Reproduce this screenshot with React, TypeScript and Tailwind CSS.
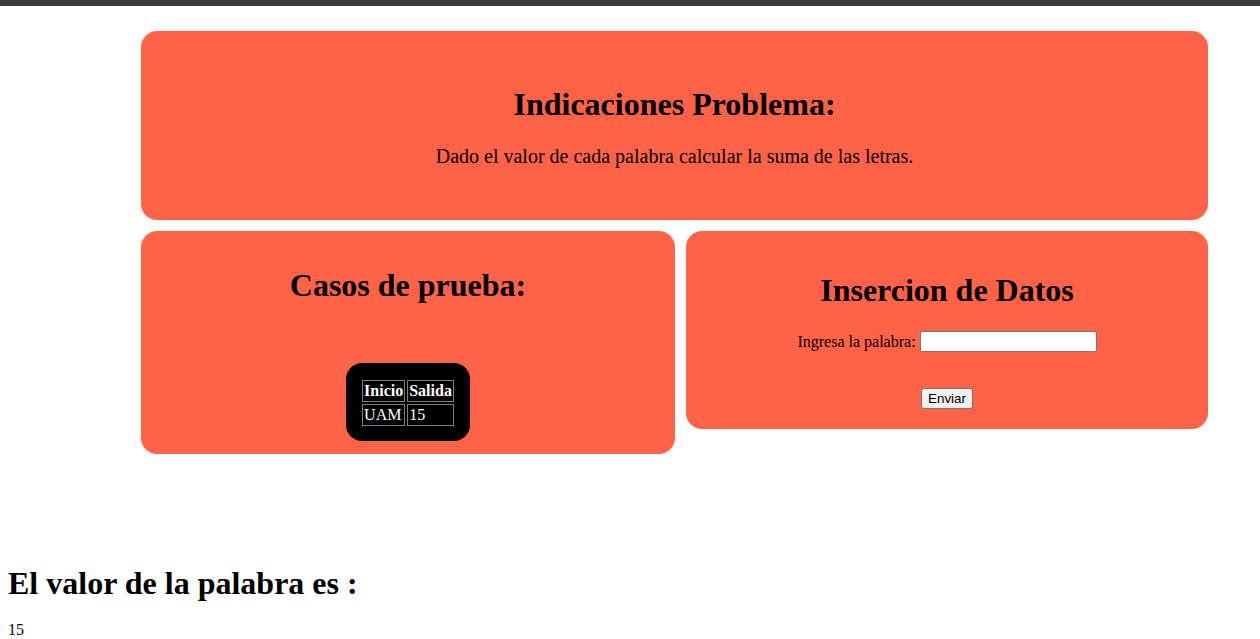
export default function App() {
  return (
    <div className="min-h-screen bg-white text-black font-['Liberation_Serif','Times_New_Roman',serif]">
      <div className="h-[6px] bg-[#3c3c3c]" />

      <div className="ml-[141px] mr-[52px] mt-[25px] flex flex-col gap-[11px]">
        <section className="rounded-[16px] bg-[#ff6347] px-8 pt-[55px] pb-[52px] text-center">
          <h1 className="text-[32px] leading-[37px] font-bold">Indicaciones Problema:</h1>
          <p className="mt-[22px] text-[20px] leading-[23px]">
            Dado el valor de cada palabra calcular la suma de las letras.
          </p>
        </section>

        <div className="flex items-start gap-[11px]">
          <section className="w-[534px] rounded-[16px] bg-[#ff6347] pt-[36px] pb-[13px] flex flex-col items-center">
            <h1 className="text-[32px] leading-[37px] font-bold">Casos de prueba:</h1>
            <div className="mt-[59px] rounded-[16px] bg-black px-[14px] pt-[15px] pb-[13px]">
              <table className="border-separate border-spacing-[2px] text-white text-[16px] leading-[18px]">
                <thead>
                  <tr>
                    <th className="border border-[#808080] px-[1px] py-[1px] font-bold text-left">Inicio</th>
                    <th className="border border-[#808080] px-[1px] py-[1px] font-bold text-left">Salida</th>
                  </tr>
                </thead>
                <tbody>
                  <tr>
                    <td className="border border-[#808080] px-[1px] py-[1px]">UAM</td>
                    <td className="border border-[#808080] px-[1px] py-[1px]">15</td>
                  </tr>
                </tbody>
              </table>
            </div>
          </section>

          <section className="w-[522px] rounded-[16px] bg-[#ff6347] pt-[41px] pb-[20px] flex flex-col items-center">
            <h1 className="text-[32px] leading-[37px] font-bold">Insercion de Datos</h1>
            <form className="mt-[22px] flex flex-col items-center" onSubmit={(e) => e.preventDefault()}>
              <label className="flex items-center gap-[4px] text-[16px] leading-[19px]">
                Ingresa la palabra:
                <input
                  type="text"
                  className="w-[177px] h-[21px] bg-white border border-[#767676] rounded-[2px] px-[2px] text-[13px]"
                />
              </label>
              <button
                type="submit"
                className="mt-[36px] h-[21px] px-[6px] bg-[#efefef] border border-[#767676] rounded-[3px] text-[13.33px] leading-[15px] font-['Liberation_Sans',Arial,sans-serif]"
              >
                Enviar
              </button>
            </form>
          </section>
        </div>
      </div>

      <div className="px-2 mt-[111px]">
        <h1 className="text-[32px] leading-[37px] font-bold">El valor de la palabra es :</h1>
        <p className="mt-[18px] text-[16px] leading-[19px]">15</p>
      </div>
    </div>
  )
}
